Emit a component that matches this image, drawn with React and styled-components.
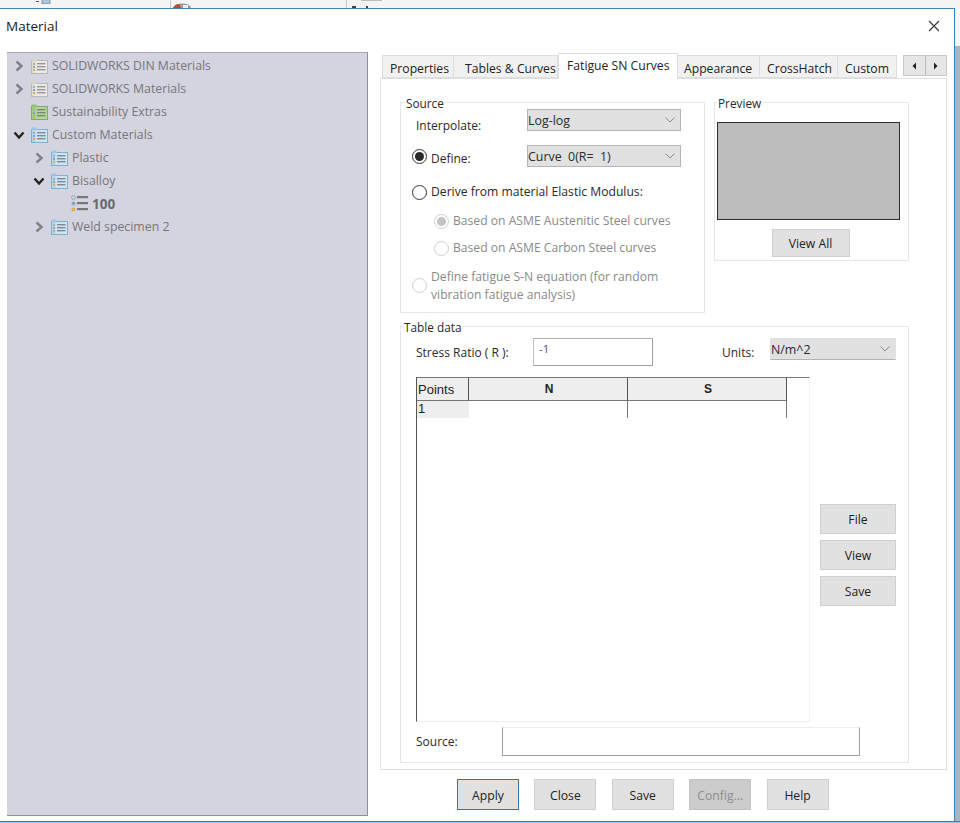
import styled, { createGlobalStyle } from "styled-components";

const GlobalStyle = createGlobalStyle`
  html, body {
    margin: 0;
    padding: 0;
    height: 823px;
    overflow: hidden;
    background: #f3f3f3;
    font-family: "Open Sans", "Noto Sans", "Liberation Sans", sans-serif;
  }
`;

const Page = styled.div`
  width: 960px;
  height: 823px;
  display: flex;
  flex-direction: column;
  overflow: hidden;
`;

const BackStrip = styled.div`
  height: 8px;
  display: flex;
  align-items: flex-start;
  background: #f4f4f4;
  flex: none;
`;

const StripCell = styled.div`
  width: ${(p) => p.$w}px;
  height: 8px;
  flex: none;
  display: flex;
  align-items: ${(p) => (p.$low ? "flex-end" : "flex-start")};
  border-right: ${(p) => (p.$line ? "1px solid #c9c9c9" : "none")};
  box-sizing: border-box;
  padding-left: ${(p) => p.$pad || 0}px;
`;

const Middle = styled.div`
  flex: 1;
  display: flex;
  min-height: 0;
`;

const Window = styled.div`
  width: 955px;
  flex: none;
  box-sizing: border-box;
  background: #fff;
  border-top: 1px solid #3d86b3;
  border-right: 1px solid #3d86b3;
  display: flex;
  flex-direction: column;
`;

const SideStrip = styled.div`
  flex: 1;
  background: linear-gradient(#f7f7f7 0 38px, #aab4c4 38px);
`;

const BottomStrip = styled.div`
  height: 2px;
  flex: none;
  background: linear-gradient(#3b82b0 0 1px, #8fc6dc 1px);
`;

const TitleBar = styled.div`
  height: 43px;
  flex: none;
  display: flex;
  align-items: flex-start;
  justify-content: space-between;
  padding: 8px 14px 0 6px;
  box-sizing: border-box;
`;

const Title = styled.span`
  font-size: 13.5px;
  line-height: 18px;
  color: #1a1a1a;
`;

const CloseX = styled.svg`
  width: 12px;
  height: 12px;
  margin-top: 3px;
`;

const Body = styled.div`
  flex: 1;
  display: flex;
  align-items: flex-start;
  padding-left: 7px;
  gap: 12px;
  min-height: 0;
`;

const TreePanel = styled.div`
  width: 361px;
  height: 764px;
  flex: none;
  box-sizing: border-box;
  background: #d3d4df;
  border-top: 1px solid #a9a9ae;
  border-right: 1px solid #8f8f94;
  border-bottom: 1px solid #8f8f94;
  padding-top: 1px;
`;

const TreeRow = styled.div`
  height: 23px;
  display: flex;
  align-items: center;
  padding-left: ${(p) => 6 + p.$level * 20}px;
  box-sizing: border-box;
`;

const ChevronSlot = styled.div`
  width: 12px;
  height: 12px;
  flex: none;
  margin-right: 6px;
  display: flex;
  align-items: center;
  justify-content: center;
`;

const TreeText = styled.span`
  margin-left: ${(p) => (p.$bold ? 3 : 4)}px;
  font-size: ${(p) => (p.$bold ? 13.5 : 12.3)}px;
  line-height: 16px;
  white-space: nowrap;
  color: ${(p) => (p.$bold ? "#6a6a70" : "#76767c")};
  font-weight: ${(p) => (p.$bold ? 700 : 400)};
`;

const RightColumn = styled.div`
  width: 567px;
  flex: none;
  display: flex;
  flex-direction: column;
`;

const TabStrip = styled.div`
  height: 26px;
  display: flex;
  align-items: flex-end;
  padding-left: 2px;
  flex: none;
`;

const Tab = styled.div`
  width: ${(p) => p.$w}px;
  height: ${(p) => (p.$active ? 26 : 23)}px;
  flex: none;
  box-sizing: border-box;
  padding-left: ${(p) => p.$pad}px;
  background: ${(p) => (p.$active ? "#fff" : "#f1f1f1")};
  border: 1px solid #dedede;
  border-left: ${(p) => (p.$first || p.$active ? "1px solid #dedede" : "none")};
  border-bottom: ${(p) => (p.$active ? "none" : "1px solid #dedede")};
  font-size: 12.2px;
  line-height: ${(p) => (p.$active ? 24 : 25)}px;
  color: #222;
  white-space: nowrap;
  margin-bottom: ${(p) => (p.$active ? -1 : 0)}px;
  position: relative;
  z-index: ${(p) => (p.$active ? 1 : 0)};
`;

const TabArrows = styled.div`
  margin-left: 6px;
  margin-bottom: 2px;
  width: 44px;
  height: 21px;
  flex: none;
  display: flex;
  box-sizing: border-box;
  background: #e6e6e6;
  border: 1px solid #c8c8c8;
`;

const ArrowBtn = styled.div`
  flex: 1;
  display: flex;
  align-items: center;
  justify-content: center;
  border-left: ${(p) => (p.$divider ? "1px solid #bdbdbd" : "none")};
`;

const TabPanel = styled.div`
  height: 692px;
  box-sizing: border-box;
  border: 1px solid #dedede;
  border-left: 1px solid #e6e6e6;
  padding: 23px 0 0 19px;
  display: flex;
  flex-direction: column;
  gap: 13px;
`;

const TopGroups = styled.div`
  display: flex;
  align-items: flex-start;
  gap: 9px;
`;

const GroupBox = styled.div`
  position: relative;
  box-sizing: border-box;
  width: ${(p) => p.$w}px;
  height: ${(p) => p.$h}px;
  border: 1px solid #e6e6e6;
  flex: none;
`;

const Legend = styled.span`
  position: absolute;
  top: -7px;
  left: ${(p) => p.$left}px;
  background: #fff;
  padding: 0 1px;
  font-size: 11.8px;
  line-height: 14px;
  color: #2a2a2a;
`;

const SourceBody = styled.div`
  display: flex;
  flex-direction: column;
  padding: 6px 0 0 11px;
`;

const FieldRow = styled.div`
  display: flex;
  align-items: center;
  height: 22px;
  margin-top: ${(p) => p.$gap || 0}px;
  padding-left: ${(p) => p.$indent || 0}px;
`;

const FieldLabel = styled.span`
  font-size: 12px;
  line-height: 16px;
  color: #2a2a2a;
  white-space: nowrap;
  width: ${(p) => (p.$w ? `${p.$w}px` : "auto")};
  flex: none;
  position: relative;
  top: ${(p) => p.$down || 0}px;
  margin-left: ${(p) => p.$left || 0}px;
`;

const Select = styled.div`
  width: ${(p) => p.$w}px;
  height: 22px;
  flex: none;
  box-sizing: border-box;
  background: #e1e1e1;
  border: 1px solid ${(p) => (p.$plain ? "#e1e1e1" : "#b4b4b4")};
  border-bottom-color: #b4b4b4;
  display: flex;
  align-items: center;
  justify-content: space-between;
  padding: 0 5px 0 0;
  font-size: 12.4px;
  color: #2a2a2a;
  white-space: pre;
`;

const Radio = styled.span`
  width: 15px;
  height: 15px;
  flex: none;
  box-sizing: border-box;
  border-radius: 50%;
  border: 1px solid ${(p) => (p.$off ? "#cfcfcf" : "#333")};
  background: #fff;
  display: flex;
  align-items: center;
  justify-content: center;
  margin-right: 4px;

  &::after {
    content: "";
    display: ${(p) => (p.$on ? "block" : "none")};
    width: 9px;
    height: 9px;
    border-radius: 50%;
    background: ${(p) => (p.$off ? "#c4c4c4" : "#2a2a2a")};
  }
`;

const RadioText = styled.span`
  font-size: 12.15px;
  line-height: 18px;
  white-space: nowrap;
  color: ${(p) => (p.$off ? "#8a8a8a" : "#2a2a2a")};
`;

const WrapRow = styled.div`
  display: flex;
  align-items: center;
  margin-top: 9px;
  height: 35px;
`;

const PreviewBody = styled.div`
  display: flex;
  flex-direction: column;
  align-items: center;
  padding: 19px 8px 0 2px;
  gap: 9px;
`;

const PreviewCanvas = styled.div`
  width: 183px;
  height: 98px;
  box-sizing: border-box;
  background: #bcbcbc;
  border: 1px solid #2e2e2e;
`;

const Button = styled.div`
  width: ${(p) => p.$w || 62}px;
  height: ${(p) => p.$h || 30}px;
  flex: none;
  box-sizing: border-box;
  background: ${(p) => (p.$off ? "#cccccc" : "#e1e1e1")};
  border: 1px solid ${(p) => (p.$default ? "#2f78a8" : p.$off ? "#c4c4c4" : "#cfcfcf")};
  display: flex;
  align-items: center;
  justify-content: center;
  font-size: 12.2px;
  color: ${(p) => (p.$off ? "#8e8e8e" : "#222")};
`;

const ViewAllButton = styled(Button)`
  margin-left: 4px;
`;

const FooterButton = styled(Button)`
  padding-top: 2px;
`;

const TableBody = styled.div`
  padding: 11px 0 0 15px;
  display: flex;
  flex-direction: column;
`;

const RatioRow = styled.div`
  display: flex;
  align-items: flex-start;
  height: 28px;
`;

const TextInput = styled.div`
  width: ${(p) => p.$w}px;
  height: ${(p) => p.$h}px;
  flex: none;
  box-sizing: border-box;
  background: #fff;
  border: 1px solid #e4e4e4;
  border-right-color: #a0a0a0;
  border-bottom-color: #a0a0a0;
  border-left-color: ${(p) => (p.$wide ? "#a0a0a0" : "#c0c0c0")};
  border-top-color: ${(p) => (p.$wide ? "#ececec" : "#b0b0b0")};
  padding: 2px 0 0 5px;
  font-size: 11.5px;
  line-height: 16px;
  color: #555;
`;

const GridRow = styled.div`
  display: flex;
  align-items: flex-start;
  margin-top: 11px;
`;

const DataGrid = styled.div`
  width: 394px;
  height: 345px;
  flex: none;
  box-sizing: border-box;
  border-left: 1px solid #555;
  border-top: 1px solid #777;
  border-right: 1px solid #f4f4f4;
  border-bottom: 1px solid #eee;
`;

const GridLine = styled.div`
  display: grid;
  grid-template-columns: 52px 159px 159px;
  grid-auto-rows: ${(p) => p.$h}px;
  width: 370px;
  height: ${(p) => p.$h}px;
`;

const HeadCell = styled.div`
  box-sizing: border-box;
  background: #eeeeee;
  border-right: 1px solid #555;
  border-bottom: 1px solid #777;
  font-family: "Liberation Sans", Arial, sans-serif;
  font-size: ${(p) => (p.$bold ? 12 : 13)}px;
  line-height: ${(p) => (p.$bold ? 22 : 23)}px;
  color: #222;
  text-align: ${(p) => (p.$bold ? "center" : "left")};
  font-weight: ${(p) => (p.$bold ? 700 : 400)};
  padding-left: ${(p) => (p.$bold ? 2 : 1)}px;
`;

const Cell = styled.div`
  box-sizing: border-box;
  background: ${(p) => (p.$head ? "#eeeeee" : "#fff")};
  border-right: 1px solid ${(p) => (p.$head ? "#eeeeee" : "#777")};
  font-family: "Liberation Sans", Arial, sans-serif;
  font-size: 13px;
  line-height: 15px;
  color: #222;
  padding-left: 1px;
`;

const SideButtons = styled.div`
  margin: 127px 0 0 10px;
  display: flex;
  flex-direction: column;
  gap: 6px;
`;

const SourceRow = styled.div`
  display: flex;
  align-items: center;
  margin-top: 5px;
`;

const Footer = styled.div`
  display: flex;
  gap: 15.4px;
  padding: 9px 0 0 77px;
`;

const CHEVRON_RIGHT = "M3.5 1.5 L8.5 6 L3.5 10.5";
const CHEVRON_DOWN = "M1.5 3.5 L6 8.5 L10.5 3.5";

const Chevron = ({ open }) => (
  <svg width="12" height="12" viewBox="0 0 12 12" fill="none">
    <path
      d={open ? CHEVRON_DOWN : CHEVRON_RIGHT}
      stroke={open ? "#222" : "#808085"}
      strokeWidth="2.4"
    />
  </svg>
);

// library book icon, tone picks the colour
const TONES = {
  gray: { fill: "#ece9e2", edge: "#b9b9bb", tab: "#d6d3cc", line: "#96969b" },
  green: { fill: "#b3d59a", edge: "#7fae68", tab: "#8fc274", line: "#7c8a72" },
  blue: { fill: "#cfe4f2", edge: "#7fb0d0", tab: "#9cc6e2", line: "#7f8a96" },
};

const LibIcon = ({ tone }) => {
  const c = TONES[tone];
  return (
    <svg width="17" height="16" viewBox="0 0 17 16">
      <rect x="0.5" y="2.5" width="16" height="13" fill={c.fill} stroke={c.edge} />
      <rect x="0.5" y="0.5" width="5" height="2.5" fill={c.tab} />
      <rect x="1" y="3" width="3.5" height="12" fill={c.tab} opacity="0.55" />
      <rect x="2" y="5" width="2" height="2" fill="#a8aeb8" />
      <rect x="2" y="8" width="2" height="2" fill="#7fa9c8" />
      <rect x="2" y="11" width="2" height="2" fill="#d8b24a" />
      <rect x="6" y="5" width="8.5" height="1.4" fill={c.line} />
      <rect x="6" y="8" width="8.5" height="1.4" fill={c.line} />
      <rect x="6" y="11" width="8.5" height="1.4" fill={c.line} />
    </svg>
  );
};

const ItemIcon = () => (
  <svg width="18" height="17" viewBox="0 0 18 17">
    <circle cx="2.5" cy="2.5" r="2" fill="#d3d4df" stroke="#9a9aa2" strokeWidth="0.8" />
    <circle cx="2.5" cy="8.5" r="2" fill="#7fa9c8" />
    <circle cx="2.5" cy="14.5" r="2" fill="#d8b24a" />
    <rect x="6" y="1" width="11" height="2.2" fill="#78787c" />
    <rect x="6" y="7" width="11" height="2.2" fill="#78787c" />
    <rect x="6" y="13" width="11" height="2.2" fill="#78787c" />
  </svg>
);

const Caret = () => (
  <svg width="10" height="6" viewBox="0 0 10 6" fill="none">
    <path d="M0.5 0.5 L5 5 L9.5 0.5" stroke="#8a8a8a" strokeWidth="1" />
  </svg>
);

const TREE = [
  { level: 0, label: "SOLIDWORKS DIN Materials", tone: "gray", chevron: "closed" },
  { level: 0, label: "SOLIDWORKS Materials", tone: "gray", chevron: "closed" },
  { level: 0, label: "Sustainability Extras", tone: "green" },
  { level: 0, label: "Custom Materials", tone: "blue", chevron: "open" },
  { level: 1, label: "Plastic", tone: "blue", chevron: "closed" },
  { level: 1, label: "Bisalloy", tone: "blue", chevron: "open" },
  { level: 2, label: "100", item: true },
  { level: 1, label: "Weld specimen 2", tone: "blue", chevron: "closed" },
];

const TABS = [
  { label: "Properties", w: 72, pad: 7, first: true },
  { label: "Tables & Curves", w: 104, pad: 11 },
  { label: "Fatigue SN Curves", w: 120, pad: 8, active: true },
  { label: "Appearance", w: 82, pad: 6 },
  { label: "CrossHatch", w: 78, pad: 7 },
  { label: "Custom", w: 59, pad: 7 },
];

const App = () => {
  return (
    <Page>
      <GlobalStyle />
      <BackStrip>
        <StripCell $w={36} />
        <StripCell $w={135} $line>
          <svg width="16" height="4" viewBox="0 0 16 4">
            <rect x="0" y="1" width="3" height="1" fill="#555" />
            <rect x="6" y="-1" width="8" height="5" fill="#a9c4dc" stroke="#667" strokeWidth="0.6" />
          </svg>
        </StripCell>
        <StripCell $w={176} $line $low $pad={1}>
          <svg width="20" height="5" viewBox="0 0 20 5">
            <path d="M1 5 Q3 0.5 10 0.5 Q18 0.5 19 5 Z" fill="#9a9a9a" />
            <path d="M1 5 Q3 1 7 1 L9 5 Z" fill="#c0472a" />
            <rect x="11" y="2" width="5" height="3" fill="#eee" />
          </svg>
        </StripCell>
        <StripCell $w={40} $low $pad={5}>
          <svg width="30" height="8" viewBox="0 0 30 8">
            <rect x="9" y="0" width="21" height="1" fill="#bdbdbd" />
            <rect x="0" y="6" width="4" height="2" fill="#444" />
            <rect x="14" y="6" width="2" height="2" fill="#444" />
          </svg>
        </StripCell>
      </BackStrip>
      <Middle>
        <Window>
          <TitleBar>
            <Title>Material</Title>
            <CloseX viewBox="0 0 12 12">
              <path d="M1 1 L11 11 M11 1 L1 11" stroke="#333" strokeWidth="1.1" fill="none" />
            </CloseX>
          </TitleBar>
          <Body>
            <TreePanel>
              {TREE.map((row) => (
                <TreeRow key={row.label} $level={row.level}>
                  <ChevronSlot>
                    {row.chevron && <Chevron open={row.chevron === "open"} />}
                  </ChevronSlot>
                  {row.item ? <ItemIcon /> : <LibIcon tone={row.tone} />}
                  <TreeText $bold={row.item}>{row.label}</TreeText>
                </TreeRow>
              ))}
            </TreePanel>
            <RightColumn>
              <TabStrip>
                {TABS.map((t) => (
                  <Tab key={t.label} $w={t.w} $pad={t.pad} $active={t.active} $first={t.first}>
                    {t.label}
                  </Tab>
                ))}
                <TabArrows>
                  <ArrowBtn>
                    <svg width="5" height="8" viewBox="0 0 5 8">
                      <path d="M4 0.5 V7.5 L0.5 4 Z" fill="#222" />
                    </svg>
                  </ArrowBtn>
                  <ArrowBtn $divider>
                    <svg width="5" height="8" viewBox="0 0 5 8">
                      <path d="M1 0.5 V7.5 L4.5 4 Z" fill="#222" />
                    </svg>
                  </ArrowBtn>
                </TabArrows>
              </TabStrip>
              <TabPanel>
                <TopGroups>
                  <GroupBox $w={305} $h={211}>
                    <Legend $left={4}>Source</Legend>
                    <SourceBody>
                      <FieldRow $indent={4}>
                        <FieldLabel $w={111} $down={6}>Interpolate:</FieldLabel>
                        <Select $w={154}>
                          Log-log
                          <Caret />
                        </Select>
                      </FieldRow>
                      <FieldRow $gap={14}>
                        <Radio $on />
                        <FieldLabel $w={96} $down={3}>Define:</FieldLabel>
                        <Select $w={154}>
                          Curve  0(R=  1)
                          <Caret />
                        </Select>
                      </FieldRow>
                      <FieldRow $gap={14}>
                        <Radio />
                        <RadioText>Derive from material Elastic Modulus:</RadioText>
                      </FieldRow>
                      <FieldRow $gap={7} $indent={22}>
                        <Radio $on $off />
                        <RadioText $off>Based on ASME Austenitic Steel curves</RadioText>
                      </FieldRow>
                      <FieldRow $gap={5} $indent={22}>
                        <Radio $off />
                        <RadioText $off>Based on ASME Carbon Steel curves</RadioText>
                      </FieldRow>
                      <WrapRow>
                        <Radio $off />
                        <RadioText $off>
                          Define fatigue S-N equation (for random
                          <br />
                          vibration fatigue analysis)
                        </RadioText>
                      </WrapRow>
                    </SourceBody>
                  </GroupBox>
                  <GroupBox $w={195} $h={159}>
                    <Legend $left={2}>Preview</Legend>
                    <PreviewBody>
                      <PreviewCanvas />
                      <ViewAllButton $w={78} $h={28}>View All</ViewAllButton>
                    </PreviewBody>
                  </GroupBox>
                </TopGroups>
                <GroupBox $w={509} $h={437}>
                  <Legend $left={2}>Table data</Legend>
                  <TableBody>
                    <RatioRow>
                      <FieldLabel $w={117} $down={7}>Stress Ratio ( R ):</FieldLabel>
                      <TextInput $w={120} $h={28}>-1</TextInput>
                      <FieldLabel $w={48} $left={69} $down={7}>Units:</FieldLabel>
                      <Select $w={126} $plain>
                        N/m^2
                        <Caret />
                      </Select>
                    </RatioRow>
                    <GridRow>
                      <DataGrid>
                        <GridLine $h={23}>
                          <HeadCell>Points</HeadCell>
                          <HeadCell $bold>N</HeadCell>
                          <HeadCell $bold>S</HeadCell>
                        </GridLine>
                        <GridLine $h={17}>
                          <Cell $head>1</Cell>
                          <Cell />
                          <Cell />
                        </GridLine>
                      </DataGrid>
                      <SideButtons>
                        <Button $w={76}>File</Button>
                        <Button $w={76}>View</Button>
                        <Button $w={76}>Save</Button>
                      </SideButtons>
                    </GridRow>
                    <SourceRow>
                      <FieldLabel $w={86}>Source:</FieldLabel>
                      <TextInput $w={358} $h={29} $wide />
                    </SourceRow>
                  </TableBody>
                </GroupBox>
              </TabPanel>
              <Footer>
                <FooterButton $default $h={31}>Apply</FooterButton>
                <FooterButton $h={31}>Close</FooterButton>
                <FooterButton $h={31}>Save</FooterButton>
                <FooterButton $off $h={31}>Config...</FooterButton>
                <FooterButton $h={31}>Help</FooterButton>
              </Footer>
            </RightColumn>
          </Body>
        </Window>
        <SideStrip />
      </Middle>
      <BottomStrip />
    </Page>
  );
};

export default App;
